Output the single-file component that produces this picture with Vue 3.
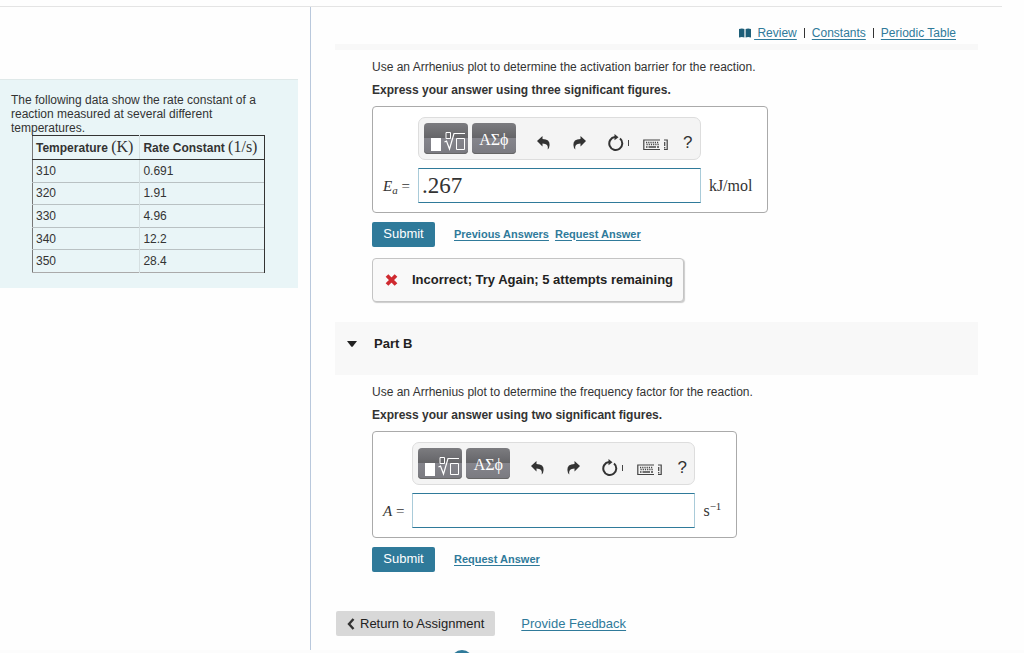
<script setup>
import { ref } from 'vue'

const rows = [
  ['310', '0.691'],
  ['320', '1.91'],
  ['330', '4.96'],
  ['340', '12.2'],
  ['350', '28.4'],
]

const parts = ref([
  {
    id: 'a',
    question: 'Use an Arrhenius plot to determine the activation barrier for the reaction.',
    hint: 'Express your answer using three significant figures.',
    symbol: 'E',
    sub: 'a',
    value: '.267',
    unit: 'kJ/mol',
    links: ['Previous Answers', 'Request Answer'],
    feedback: 'Incorrect; Try Again; 5 attempts remaining',
  },
  {
    id: 'b',
    title: 'Part B',
    question: 'Use an Arrhenius plot to determine the frequency factor for the reaction.',
    hint: 'Express your answer using two significant figures.',
    symbol: 'A',
    value: '',
    unit: 's',
    exponent: '−1',
    links: ['Request Answer'],
  },
])
</script>

<template>
  <div class="page">
    <div class="topline"></div>
    <div class="columns">
      <aside class="side">
        <section class="intro">
          <p>The following data show the rate constant of a reaction measured at several different temperatures.</p>
          <table>
            <thead>
              <tr>
                <th scope="col">Temperature <span class="math">(K)</span></th>
                <th scope="col">Rate Constant <span class="math">(1/s)</span></th>
              </tr>
            </thead>
            <tbody>
              <tr v-for="row in rows" :key="row[0]">
                <td>{{ row[0] }}</td>
                <td>{{ row[1] }}</td>
              </tr>
            </tbody>
          </table>
        </section>
      </aside>

      <main class="main">
        <nav class="resources">
          <svg width="12" height="10" viewBox="0 0 12 10" aria-hidden="true">
            <path d="M0 1Q3 0 5.4 1V9.4Q3 8.6 0 9.4ZM6.6 1Q9 0 12 1V9.4Q9 8.6 6.6 9.4Z" fill="#1d5e78" />
          </svg>
          <a href="#review" class="review">&nbsp;Review</a>
          <span class="bar"></span>
          <a href="#constants">Constants</a>
          <span class="bar"></span>
          <a href="#periodic-table">Periodic Table</a>
        </nav>
        <div class="strip"></div>

        <section v-for="part in parts" :key="part.id">
          <h2 v-if="part.title" class="part-head">
            <button type="button">
              <svg width="10" height="6" viewBox="0 0 10 6" aria-hidden="true"><path d="M0 0H10L5.8 5.4Q5 6 4.2 5.4Z" fill="#222" /></svg>
              {{ part.title }}
            </button>
          </h2>
          <div class="body">
            <p class="question">{{ part.question }}</p>
            <p class="hint">{{ part.hint }}</p>

            <div class="answer">
              <div class="toolbar">
                <button type="button" class="tool dark" aria-label="Templates">
                  <svg width="44" height="31" viewBox="0 0 44 31" aria-hidden="true">
                    <rect x="7" y="15" width="10" height="13" fill="#fff" />
                    <path d="M22 9.500h4.500v6h-4.500zM32.500 15.500h8v11h-8z" fill="none" stroke="#fff" />
                    <path d="M20.500 19l2-1 3 8 4.500-15.500h11" fill="none" stroke="#fff" stroke-width="1.200" />
                  </svg>
                </button>
                <button type="button" class="tool dark greek" aria-label="Symbols">ΑΣϕ</button>
                <button type="button" class="tool undo" aria-label="undo">
                  <svg width="13" height="14" viewBox="0 0 13 14" aria-hidden="true"><path d="M0 5L5.500 0V3Q13 3.200 12.600 9Q12.500 12 10.700 13.500Q12 7.500 5.500 7.500V10.500Z" fill="#333" /></svg>
                </button>
                <button type="button" class="tool redo" aria-label="redo">
                  <svg width="13" height="14" viewBox="0 0 13 14" aria-hidden="true"><path d="M13 5L7.500 0V3Q0 3.200 .400 9Q.500 12 2.300 13.500Q1 7.500 7.500 7.500V10.500Z" fill="#333" /></svg>
                </button>
                <button type="button" class="tool reset" aria-label="reset">
                  <svg width="23" height="17" viewBox="0 0 23 17" aria-hidden="true">
                    <path d="M13 4.500A6.500 6.500 0 1 1 8 3" fill="none" stroke="#333" stroke-width="2" />
                    <path d="M7.500 0L11.500 3.200L7.500 6.200Z" fill="#333" />
                    <path d="M21.500 6v6" stroke="#444" />
                  </svg>
                </button>
                <button type="button" class="tool keys" aria-label="keyboard shortcuts">
                  <svg width="25" height="12" viewBox="0 0 25 12" aria-hidden="true">
                    <path d="M17 1H.800V10.500H17" fill="none" stroke="#444" stroke-width="1.200" />
                    <path d="M3 3.500H16M3.500 5.500H16" stroke="#444" stroke-width="1.300" stroke-dasharray="1.200 1" />
                    <path d="M3 8H4.500M5.500 8H13M14 8H16" stroke="#444" stroke-width="1.500" />
                    <path d="M21 1H24.200V10.500H21" fill="none" stroke="#444" stroke-width="1.200" />
                    <path d="M21.700 3V7M21.700 8V9.500" stroke="#444" stroke-width="1.200" />
                  </svg>
                </button>
                <button type="button" class="tool help" aria-label="help">?</button>
              </div>
              <label :for="'answer-' + part.id" class="math">
                <i>{{ part.symbol }}</i><sub v-if="part.sub"><i>{{ part.sub }}</i></sub> =
              </label>
              <input :id="'answer-' + part.id" v-model="part.value" type="text" autocomplete="off" />
              <span class="math unit">{{ part.unit }}<sup v-if="part.exponent">{{ part.exponent }}</sup></span>
            </div>

            <div class="actions">
              <button type="button" class="submit">Submit</button>
              <a v-for="link in part.links" :key="link" href="#answers">{{ link }}</a>
            </div>

            <div v-if="part.feedback" class="feedback" role="status">
              <svg width="13" height="12" viewBox="0 0 13 12" aria-hidden="true"><path d="M2 1.500L11 10.500M11 1.500L2 10.500" stroke="#cf2a30" stroke-width="3.800" /></svg>
              {{ part.feedback }}
            </div>
          </div>
        </section>

        <div class="bottom">
          <button type="button" class="return">
            <svg width="8" height="12" viewBox="0 0 8 12" aria-hidden="true"><path d="M6.500 1L2 6L6.500 11" fill="none" stroke="#333" stroke-width="2.400" /></svg>
            Return to Assignment
          </button>
          <a href="#feedback">Provide Feedback</a>
        </div>
      </main>
    </div>
    <footer><span class="badge"></span></footer>
  </div>
</template>

<style>
body {
  margin: 0;
  background: #fefefe;
}
</style>

<style scoped>
* {
  box-sizing: border-box;
}
.page {
  min-height: 100vh;
  display: flex;
  flex-direction: column;
  font: 12px/14px "Liberation Sans", Arial, sans-serif;
  color: #333;
}
p,
h2 {
  margin: 0;
}
button {
  margin: 0;
  padding: 0;
  border: 0;
  background: none;
  font: inherit;
  color: inherit;
  cursor: pointer;
}
svg {
  display: block;
  flex: none;
}
a {
  color: #2f7a9a;
  text-underline-offset: 2px;
}
.math {
  font-family: "Liberation Serif", "Times New Roman", serif;
}
.topline {
  height: 1px;
  margin: 6px 22px 0 0;
  background: #e4e4e4;
}
.columns {
  flex: 1;
  display: flex;
}
.side {
  flex: 0 0 311px;
  padding: 72px 12px 0 0;
  border-right: 1px solid #b9c8dc;
}
.intro {
  padding: 13px 33px 15px 11px;
  border-top: 1px solid #dfe9e9;
  background: #e9f5f7;
}
table {
  width: 233px;
  height: 138px;
  margin-left: 21px;
  border-collapse: collapse;
  border: 1px solid #333;
  border-left-color: #777;
  border-bottom-color: #aaa;
}
th,
td {
  padding: 3px;
  text-align: left;
  line-height: 14px;
  border-right: 1px solid #d5dfe1;
}
td {
  border-top: 1px solid #b9c1c3;
}
th:last-child,
td:last-child {
  border-right-color: #333;
}
thead th {
  height: 24px;
  padding-bottom: 4px;
  white-space: nowrap;
  border-bottom: 1px solid #333;
}
th .math {
  font-size: 16px;
  font-weight: 400;
}
.main {
  flex: 1;
  margin: 0 46px 0 24px;
}
.resources {
  display: flex;
  align-items: center;
  justify-content: flex-end;
  gap: 7px;
  height: 37px;
  padding: 15px 22px 0 0;
}
.review {
  margin-left: -4px;
}
.bar {
  width: 1px;
  height: 10px;
  background: #333;
}
.strip {
  height: 6px;
  background: #f8f8f8;
}
.part-head {
  height: 53px;
  background: #f8f8f8;
  font-size: 13px;
  color: #222;
}
.part-head button {
  display: flex;
  align-items: center;
  gap: 17px;
  padding: 15px 12px;
  font-weight: 700;
}
.body {
  padding: 9px 0 20px 37px;
}
.question,
.hint {
  line-height: 16px;
}
.hint {
  margin: 7px 0 8px;
  font-weight: 700;
}
.answer {
  width: fit-content;
  display: grid;
  grid-template-columns: auto 283px auto;
  column-gap: 8px;
  row-gap: 8px;
  align-items: center;
  padding: 10px 15px 9px 10px;
  border: 1px solid #aaa;
  border-radius: 4px;
  background: #fff;
}
.toolbar {
  grid-row: 1;
  grid-column: 2;
  display: flex;
  align-items: center;
  height: 43px;
  padding: 0 7px 0 5px;
  border: 1px solid #ddd;
  border-radius: 7px;
  background: #f4f4f4;
}
.dark {
  width: 44px;
  height: 31px;
  margin-right: 4px;
  border-radius: 4px;
  background: linear-gradient(#7c7c80, #646467 50%, #85858c 50%, #7a7a80);
  box-shadow: inset 0 -1px #666;
}
.greek {
  margin-right: 21px;
  padding-top: 3px;
  color: #fff;
  font: 16px/28px "Liberation Serif", "DejaVu Serif", serif;
}
.redo {
  margin-left: 23px;
}
.reset {
  margin-left: 21px;
}
.keys {
  margin-left: 13px;
}
.undo,
.redo,
.reset,
.help {
  padding-top: 8px;
}
.keys {
  padding-top: 12px;
}
.help {
  margin-left: 15px;
  font-size: 17px;
}
label {
  grid-row: 2;
  grid-column: 1;
  font-size: 15px;
  line-height: 20px;
  white-space: nowrap;
}
sub {
  font-size: 11px;
  line-height: 0;
  vertical-align: -3px;
}
sup {
  font-size: 11px;
  line-height: 0;
  vertical-align: 6px;
}
.answer input {
  grid-row: 2;
  grid-column: 2;
  width: 100%;
  height: 35px;
  padding: 0 3px;
  border: 1px solid #2f7a9a;
  border-right-color: #a9cbd9;
  border-left-color: #a9cbd9;
  border-radius: 0;
  outline: 0;
  background: #fff;
  color: #333;
  font: 23px/33px "Liberation Serif", "Times New Roman", serif;
}
.unit {
  grid-row: 2;
  grid-column: 3;
  font-size: 16px;
  line-height: 20px;
}
.actions {
  display: flex;
  align-items: center;
  gap: 6px;
  margin-top: 9px;
  font-size: 11px;
  line-height: 12px;
  font-weight: 700;
}
.actions a {
  padding-bottom: 2px;
}
.submit {
  width: 63px;
  height: 25px;
  margin-right: 13px;
  padding-bottom: 2px;
  border-radius: 2px;
  background: #2f7a9a;
  color: #fff;
  font-size: 13px;
  font-weight: 400;
}
.feedback {
  width: fit-content;
  display: flex;
  align-items: center;
  gap: 14px;
  height: 44px;
  margin-top: 11px;
  padding: 0 10px 0 12px;
  border: 1px solid #c4c4c4;
  border-radius: 4px;
  background: #f9f9f9;
  box-shadow: 1px 1px 1px #ccc;
  font-size: 13px;
  font-weight: 700;
  color: #222;
}
.bottom {
  display: flex;
  align-items: center;
  gap: 26px;
  margin: 19px 0 14px 1px;
  font-size: 13px;
}
.return {
  display: flex;
  align-items: center;
  gap: 5px;
  height: 25px;
  padding: 0 11px;
  border-radius: 2px;
  background: #d8d8d8;
  color: #222;
}
footer {
  height: 3px;
  overflow: hidden;
  padding-left: 451px;
  background: #fcfcfc;
}
.badge {
  display: block;
  width: 22px;
  height: 22px;
  border-radius: 50%;
  background: #2f7a9a;
}
</style>
